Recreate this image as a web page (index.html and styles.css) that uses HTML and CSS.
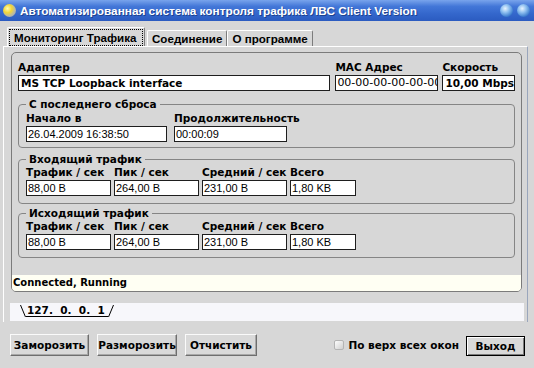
FILE: index.html
```html
<!DOCTYPE html>
<html lang="ru">

<head>
    <meta charset="UTF-8">
    <title>Автоматизированная система контроля трафика ЛВС Client Version</title>
    <link rel="stylesheet" href="styles.css">
</head>

<body>
    <div class="window">
        <div class="titlebar">
            <span class="app-icon"></span>
            <span class="title">Автоматизированная система контроля трафика ЛВС Client Version</span>
            <span class="title-btn"></span>
            <span class="title-btn"></span>
        </div>

        <div class="tabs">
            <div class="tab active"><span class="focus">Мониторинг Трафика</span></div>
            <div class="tab">Соединение</div>
            <div class="tab">О программе</div>
        </div>

        <div class="tab-panel">
            <div class="monitor">
                <div class="row top-row">
                    <div class="field w-adapter">
                        <span class="label">Адаптер</span>
                        <span class="input strong">MS TCP Loopback interface</span>
                    </div>
                    <div class="field w-mac">
                        <span class="label">MAC Адрес</span>
                        <span class="input mac">00-00-00-00-00-00</span>
                    </div>
                    <div class="field w-speed">
                        <span class="label">Скорость</span>
                        <span class="input strong">10,00 Mbps</span>
                    </div>
                </div>

                <fieldset class="group reset">
                    <legend>С последнего сброса</legend>
                    <div class="row wide-gap">
                        <div class="field w-start">
                            <span class="label">Начало в</span>
                            <span class="input">26.04.2009 16:38:50</span>
                        </div>
                        <div class="field w-duration">
                            <span class="label">Продолжительность</span>
                            <span class="input">00:00:09</span>
                        </div>
                    </div>
                </fieldset>

                <fieldset class="group traffic in">
                    <legend>Входящий трафик</legend>
                    <div class="row">
                        <div class="field w-num">
                            <span class="label">Трафик / сек</span>
                            <span class="input">88,00 B</span>
                        </div>
                        <div class="field w-num">
                            <span class="label">Пик / сек</span>
                            <span class="input">264,00 B</span>
                        </div>
                        <div class="field w-num">
                            <span class="label">Средний / сек</span>
                            <span class="input">231,00 B</span>
                        </div>
                        <div class="field w-total">
                            <span class="label">Всего</span>
                            <span class="input">1,80 KB</span>
                        </div>
                    </div>
                </fieldset>

                <fieldset class="group traffic out">
                    <legend>Исходящий трафик</legend>
                    <div class="row">
                        <div class="field w-num">
                            <span class="label">Трафик / сек</span>
                            <span class="input">88,00 B</span>
                        </div>
                        <div class="field w-num">
                            <span class="label">Пик / сек</span>
                            <span class="input">264,00 B</span>
                        </div>
                        <div class="field w-num">
                            <span class="label">Средний / сек</span>
                            <span class="input">231,00 B</span>
                        </div>
                        <div class="field w-total">
                            <span class="label">Всего</span>
                            <span class="input">1,80 KB</span>
                        </div>
                    </div>
                </fieldset>

                <div class="status">Connected, Running</div>
            </div>

            <div class="hosts">
                <span class="host-tab">
                    <svg class="edge" width="6" height="12"><line x1="0.5" y1="0" x2="5.5" y2="12" /></svg>
                    <span class="host">127.&nbsp; 0.&nbsp; 0.&nbsp; 1</span>
                    <svg class="edge" width="6" height="12"><line x1="0.5" y1="12" x2="5.5" y2="0" /></svg>
                </span>
            </div>
        </div>

        <div class="buttons">
            <button class="btn w-freeze">Заморозить</button>
            <button class="btn w-unfreeze">Разморозить</button>
            <button class="btn w-clear">Отчистить</button>
            <div class="ontop">
                <span class="checkbox"></span>
                <span>По верх всех окон</span>
            </div>
            <button class="btn exit">Выход</button>
        </div>
    </div>
</body>

</html>
```

FILE: styles.css
```css
* {
    margin: 0;
    padding: 0;
    box-sizing: border-box;
}

body {
    width: 534px;
    height: 368px;
    overflow: hidden;
    background: #d7d7d7;
    color: #000;
    font-family: "DejaVu Sans", sans-serif;
    font-size: 10.5px;
    font-weight: bold;
}

.window {
    display: flex;
    flex-direction: column;
    height: 368px;
}

/* заголовок окна */
.titlebar {
    height: 21px;
    display: flex;
    align-items: center;
    padding: 0 4px 0 3px;
    background: linear-gradient(#79a4ec, #4377d8 30%, #3467cc 65%, #2b5bc0);
    color: #fff;
    font-family: "Liberation Sans", sans-serif;
    font-size: 11.8px;
}

.app-icon {
    width: 13px;
    height: 13px;
    margin-right: 4px;
    border-radius: 50%;
    background: radial-gradient(circle at 35% 35%, #fffbb0, #f2d638 35%, #b8b8a8 65%, #8f98a8);
}

.title {
    flex: 1;
    white-space: nowrap;
    text-shadow: 1px 1px 0 #1d428f;
}

.title-btn {
    width: 13px;
    height: 13px;
    margin-left: 4px;
    border-radius: 50%;
    background: radial-gradient(circle at 40% 35%, #e8f4ff, #8fc0f0 35%, #3f7fd0 70%, #2a5aa8);
}

/* вкладки */
.tabs {
    height: 25px;
    display: flex;
    align-items: flex-end;
    padding: 6px 0 0 7px;
    font-family: "Liberation Sans", sans-serif;
    font-size: 11.6px;
}

.tab {
    height: 16px;
    padding: 0 4px;
    line-height: 15px;
    white-space: nowrap;
    border-top: 1px solid #fff;
    border-left: 1px solid #fff;
    border-right: 1px solid #7c7c7c;
    border-radius: 2px 2px 0 0;
}

.tab.active {
    width: 138px;
    height: 19px;
    margin-right: 2px;
    padding: 1px 1px 1px 1px;
}

.tab.active .focus {
    display: block;
    height: 17px;
    line-height: 15px;
    padding-left: 4px;
    border: 1px dotted #000;
}

.tab-panel {
    margin: 0 6px 0 3px;
    padding: 5px 5px 1px 7px;
    border-top: 1px solid #fff;
    border-left: 1px solid #fff;
    border-right: 1px solid #9aa6bc;
}

.monitor {
    border: 1px solid #7b7b7b;
    border-radius: 5px;
    overflow: hidden;
    padding-top: 8px;
}

.row {
    display: flex;
    gap: 3px;
}

.top-row {
    padding: 0 6px;
    gap: 0;
}

.wide-gap {
    gap: 7px;
}

.field {
    display: flex;
    flex-direction: column;
}

.label {
    height: 12px;
    line-height: 12px;
    margin-bottom: 2px;
    white-space: nowrap;
}

.input {
    height: 16px;
    padding-left: 1px;
    line-height: 14px;
    border: 1px solid #1e1e1e;
    background: #fff;
    font-family: "Liberation Sans", sans-serif;
    font-size: 11px;
    font-weight: normal;
    white-space: nowrap;
    overflow: hidden;
}

.input.strong {
    padding-left: 2px;
    font-family: "DejaVu Sans", sans-serif;
    font-size: 10.5px;
    font-weight: bold;
}

/* в оригинале адрес не помещается в поле и обрезается */
.input.mac {
    padding-left: 1px;
    font-family: "DejaVu Sans", sans-serif;
    font-size: 11px;
}

.w-adapter { width: 314px; }
.w-mac { width: 103px; margin-left: 5px; }
.w-speed { width: 73px; margin-left: 4px; }
.w-start { width: 141px; }
.w-duration { width: 113px; }
.w-num { width: 85px; }
.w-total { width: 66px; }

/* группы */
.group {
    margin: 7px 6px 0;
    padding: 2px 7px 5px;
    border: 1px solid #858585;
    border-radius: 4px;
}

.group legend {
    padding: 0 3px;
    line-height: 12px;
}

.group.traffic {
    padding-top: 1px;
    padding-bottom: 7px;
}

.group.in {
    margin-top: 5px;
}

.group.out {
    margin-top: 3px;
}

.status {
    margin-top: 17px;
    height: 16px;
    line-height: 16px;
    padding-left: 1px;
    background: #fffff3;
    font-size: 10px;
}

/* нижние вкладки с адресами */
.hosts {
    height: 18px;
    margin: 11px -2px 0 -1px;
    padding: 2px 0 0 10px;
    background: #f7f7fb;
    display: flex;
    align-items: flex-start;
}

.host-tab {
    display: flex;
    align-items: flex-start;
}

.edge line {
    stroke: #000;
    stroke-width: 1;
}

.host {
    height: 12px;
    line-height: 11px;
    padding: 0 3px 0 1px;
    border-bottom: 1px solid #000;
    white-space: nowrap;
}

/* кнопки */
.buttons {
    height: 22px;
    margin-top: 12px;
    display: flex;
    align-items: center;
    padding: 0 9px 0 10px;
}

.btn {
    height: 22px;
    margin-right: 8px;
    background: #d9d9d9;
    border: 1px solid;
    border-color: #fafafa #6e6e6e #6e6e6e #fafafa;
    box-shadow: inset -1px -1px 0 #a8a8a8;
    font: inherit;
    color: #000;
    white-space: nowrap;
}

.w-freeze { width: 79px; }
.w-unfreeze { width: 80px; }
.w-clear { width: 72px; }

.ontop {
    margin-left: auto;
    margin-right: 7px;
    display: flex;
    align-items: center;
    gap: 4px;
}

.checkbox {
    width: 10px;
    height: 10px;
    border: 1px solid #b4b4b4;
    border-radius: 2px;
    background: linear-gradient(135deg, #fdfdfd, #cfcfcf);
}

.btn.exit {
    width: 59px;
    height: 20px;
    margin: 2px 0 0;
    border: 1px solid #000;
    box-shadow: inset 1px 1px 0 #fff, inset -1px -1px 0 #7a7a7a;
}
```
